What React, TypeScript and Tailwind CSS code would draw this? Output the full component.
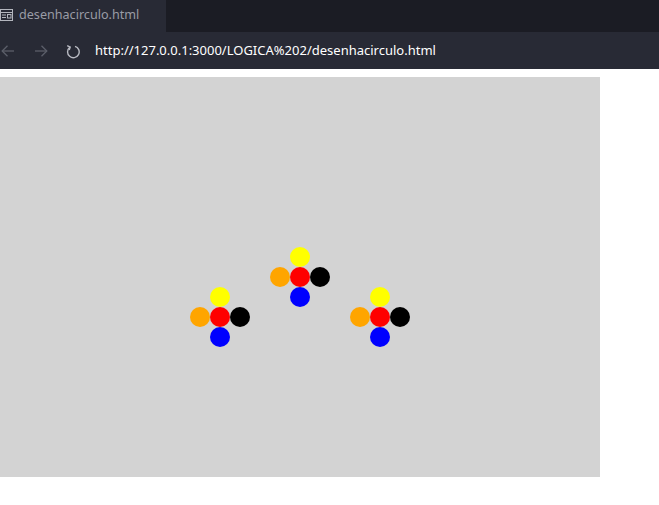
import React from 'react';

type Cluster = { x: number; y: number };

const clusters: Cluster[] = [
  { x: 220, y: 240 },
  { x: 300, y: 200 },
  { x: 380, y: 240 },
];

const TabIcon: React.FC = () => (
  <svg width="13" height="12" viewBox="0 0 13 12" fill="none" stroke="#b4b6be" strokeWidth="1">
    <rect x="0.5" y="0.5" width="12" height="11" />
    <line x1="0.5" y1="3.5" x2="12.5" y2="3.5" />
    <line x1="2" y1="6" x2="6" y2="6" />
    <line x1="2" y1="8.5" x2="6" y2="8.5" />
    <rect x="7.5" y="5.5" width="3.5" height="3.5" />
  </svg>
);

const Arrow: React.FC<{ back?: boolean }> = ({ back }) => (
  <svg width="14" height="12" viewBox="0 0 14 12" fill="none" stroke="#5c5f6a" strokeWidth="1.3">
    {back ? (
      <>
        <line x1="1" y1="6" x2="13" y2="6" />
        <polyline points="6.5,0.8 1.2,6 6.5,11.2" />
      </>
    ) : (
      <>
        <line x1="1" y1="6" x2="13" y2="6" />
        <polyline points="7.5,0.8 12.8,6 7.5,11.2" />
      </>
    )}
  </svg>
);

const Reload: React.FC = () => (
  <svg width="14" height="16" viewBox="0 0 14 16" fill="none" stroke="#b8bac2" strokeWidth="1.4">
    <path d="M9 3.3 A5.8 5.8 0 1 1 3.8 4.3" />
    <polyline points="1.2,2.6 4.2,4 3.2,7" />
  </svg>
);

const Flower: React.FC<Cluster> = ({ x, y }) => (
  <g>
    <circle cx={x} cy={y - 20} r="10" fill="yellow" />
    <circle cx={x - 20} cy={y} r="10" fill="orange" />
    <circle cx={x + 20} cy={y} r="10" fill="black" />
    <circle cx={x} cy={y + 20} r="10" fill="blue" />
    <circle cx={x} cy={y} r="10" fill="red" />
  </g>
);

const App: React.FC = () => {
  return (
    <div className="w-[659px] h-[505px] bg-white overflow-hidden" style={{ fontFamily: '"Noto Sans", "Open Sans", sans-serif' }}>
      {/* tab strip */}
      <div className="h-8 bg-[#1b1c24] flex">
        <div className="w-[166px] h-full bg-[#282a35] flex items-center gap-[6px] pb-[2px]">
          <TabIcon />
          <span className="text-[12.6px] text-[#9a9ca6]">desenhacirculo.html</span>
        </div>
      </div>

      {/* address bar */}
      <div className="h-[37px] bg-[#282a35] flex items-center">
        <div className="flex items-center pl-[1px] gap-[19px]">
          <Arrow back />
          <Arrow />
        </div>
        <div className="ml-[18px]">
          <Reload />
        </div>
        <span className="ml-[15px] text-[13px] text-white">http://127.0.0.1:3000/LOGICA%202/desenhacirculo.html</span>
      </div>

      {/* page */}
      <div className="pt-2">
        <svg width="600" height="400" className="block bg-[#d3d3d3]">
          {clusters.map((c, i) => (
            <Flower key={i} x={c.x} y={c.y} />
          ))}
        </svg>
      </div>
    </div>
  );
};

export default App;
